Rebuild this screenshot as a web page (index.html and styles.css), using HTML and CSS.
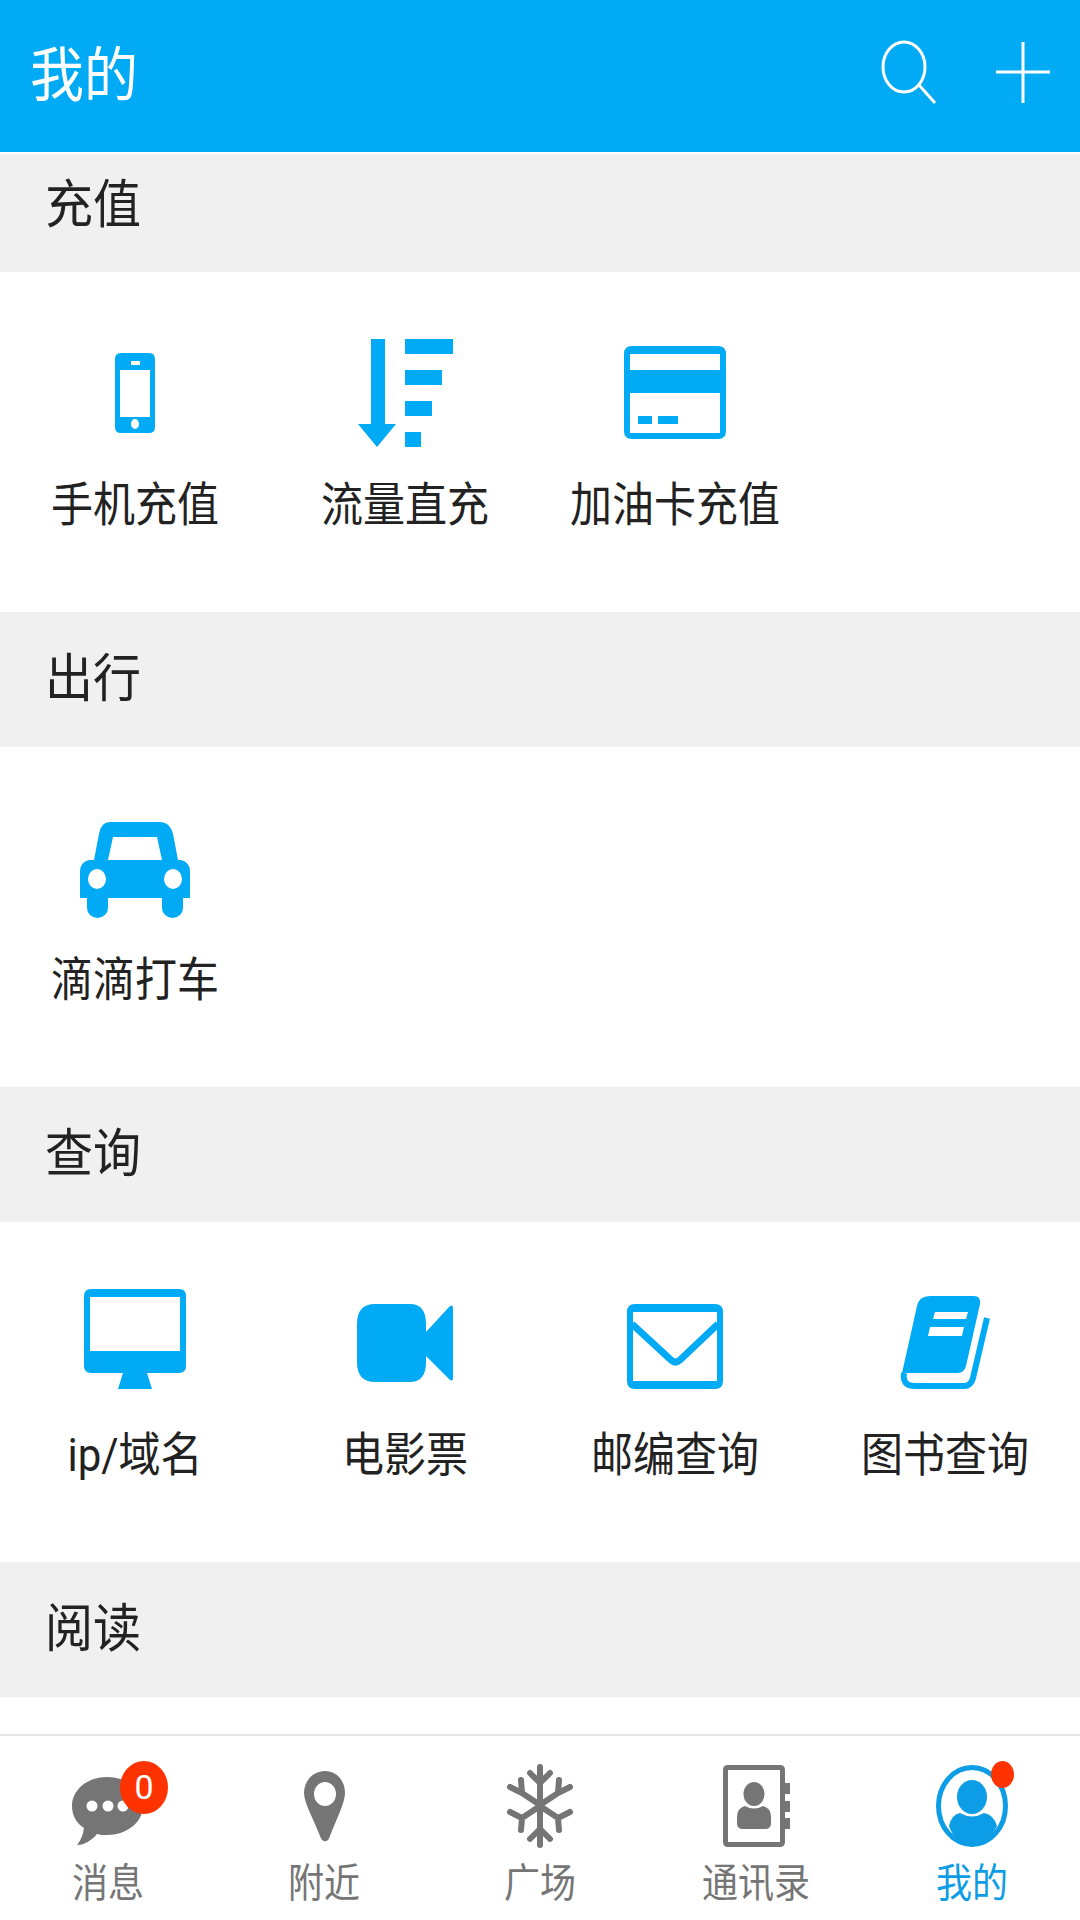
FILE: index.html
```html
<!DOCTYPE html>
<html lang="zh-CN">

<head>
    <meta charset="UTF-8">
    <meta name="viewport" content="width=device-width, initial-scale=1.0">
    <title>我的</title>
    <link rel="stylesheet" href="styles.css">
</head>

<body>
    <div class="app">
        <header class="top">
            <h1><span>我的</span></h1>
            <svg class="top-icon" width="180" height="80" viewBox="870 32 180 80">
                <ellipse cx="904" cy="67" rx="21" ry="25" fill="none" stroke="#fff" stroke-width="3" />
                <path d="M919 85L935 103" stroke="#fff" stroke-width="3" />
                <path d="M1023 42V103M996 72H1050" stroke="#fff" stroke-width="3" />
            </svg>
        </header>

        <main class="list">
            <h2 class="head first"><span>充值</span></h2>
            <div class="row">
                <div class="item">
                    <svg class="icon" viewBox="75 332 120 120">
                        <path fill-rule="evenodd" d="M121 353H149Q155 353 155 359V427Q155 433 149 433H121Q115 433 115 427V359Q115 353 121 353ZM120 370V417H150V370ZM131 361V365H140V361ZM135 419A4 5 0 1 0 135.01 429A4 5 0 1 0 135 419Z" />
                    </svg>
                    <span class="label">手机充值</span>
                </div>
                <div class="item">
                    <svg class="icon" viewBox="345 332 120 120">
                        <path d="M371 339H385V424H396L377 447L358 424H371ZM405 339H453V354H405ZM405 370H442V385H405ZM405 401H432V416H405ZM405 432H421V447H405Z" />
                    </svg>
                    <span class="label">流量直充</span>
                </div>
                <div class="item">
                    <svg class="icon" viewBox="615 332 120 120">
                        <path fill-rule="evenodd" d="M632 346H718Q726 346 726 354V431Q726 439 718 439H632Q624 439 624 431V354Q624 346 632 346ZM630 354V370H720V354ZM630 393V433H720V393ZM638 416H652V424H638ZM658 416H678V424H658Z" />
                    </svg>
                    <span class="label">加油卡充值</span>
                </div>
            </div>

            <h2 class="head"><span>出行</span></h2>
            <div class="row">
                <div class="item">
                    <svg class="icon" viewBox="75 807 120 120">
                        <path fill-rule="evenodd" d="M110 822H160Q170 822 173 834L178 860H181Q190 862 190 872V898H183V908A10.500 10 0 0 1 162 908V898H108V908A10.500 10 0 0 1 87 908V898H80V872Q80 862 89 860H94L99 834Q101 822 110 822ZM113 837L108 860H162L157 837ZM97 869A9 10 0 1 0 97.010 889A9 10 0 1 0 97 869ZM173 869A9 10 0 1 0 173.010 889A9 10 0 1 0 173 869Z" />
                    </svg>
                    <span class="label">滴滴打车</span>
                </div>
            </div>

            <h2 class="head"><span>查询</span></h2>
            <div class="row">
                <div class="item">
                    <svg class="icon" viewBox="75 1282 120 120">
                        <path fill-rule="evenodd" d="M91 1289H179Q186 1289 186 1296V1366Q186 1373 179 1373H147L152 1389H118L123 1373H91Q84 1373 84 1366V1296Q84 1289 91 1289ZM90 1297V1351H180V1297Z" />
                    </svg>
                    <span class="label">ip/域名</span>
                </div>
                <div class="item">
                    <svg class="icon" viewBox="345 1282 120 120">
                        <path d="M375 1304H410Q426 1304 426 1324V1362Q426 1382 410 1382H375Q357 1382 357 1362V1324Q357 1304 375 1304ZM426 1332L449 1307Q453 1303 453 1309V1377Q453 1383 449 1379L426 1356Z" />
                    </svg>
                    <span class="label">电影票</span>
                </div>
                <div class="item">
                    <svg class="icon" viewBox="615 1282 120 120">
                        <path fill-rule="evenodd" d="M635 1304H715Q723 1304 723 1312V1381Q723 1389 715 1389H635Q627 1389 627 1381V1312Q627 1304 635 1304ZM633 1312V1381H717V1312Z" />
                        <path d="M632 1324L671 1360Q675.500 1364 680 1360L718 1324" fill="none" stroke="#00aaf5" stroke-width="7" />
                    </svg>
                    <span class="label">邮编查询</span>
                </div>
                <div class="item">
                    <svg class="icon" viewBox="885 1282 120 120">
                        <path fill-rule="evenodd" d="M930 1296H974Q981 1296 980 1304L966 1366Q964 1373 958 1373H902L917 1306Q919 1296 930 1296ZM935 1312L933 1319H966L968 1312ZM930 1327L928 1336H962L964 1327Z" />
                        <path d="M904 1373Q902 1386 915 1386H964Q971 1386 973 1378L987 1318" fill="none" stroke="#00aaf5" stroke-width="6" />
                    </svg>
                    <span class="label">图书查询</span>
                </div>
            </div>

            <h2 class="head"><span>阅读</span></h2>
        </main>

        <nav class="tabs">
            <div class="tab">
                <svg class="tab-icon" viewBox="48 1756 120 95">
                    <path d="M107 1777C127 1777 143 1790 143 1806C143 1822 127 1835 107 1835C103 1835 100 1835 97 1834C92 1840 85 1845 77 1845C81 1840 83 1835 84 1828C76 1823 72 1815 72 1806C72 1790 87 1777 107 1777Z" />
                    <circle cx="92" cy="1806" r="5.500" fill="#fff" />
                    <circle cx="108" cy="1806" r="5.500" fill="#fff" />
                    <circle cx="123" cy="1806" r="5.500" fill="#fff" />
                </svg>
                <span class="tab-name">消息</span>
                <span class="badge">0</span>
            </div>
            <div class="tab">
                <svg class="tab-icon" viewBox="264 1756 120 95">
                    <path fill-rule="evenodd" d="M325 1771C337 1771 345 1781 345 1793C345 1803 336 1820 330 1836C328 1843 322 1843 320 1836C314 1820 304 1803 304 1793C304 1781 313 1771 325 1771ZM325 1782A11 12 0 1 0 325.010 1806A11 12 0 1 0 325 1782Z" />
                </svg>
                <span class="tab-name">附近</span>
            </div>
            <div class="tab">
                <svg class="tab-icon" viewBox="480 1756 120 95">
                    <g fill="none" stroke="#757575" stroke-width="6" stroke-linecap="round" stroke-linejoin="round">
                        <path d="M540 1767V1845M530 1773L540 1783L550 1773M530 1839L540 1829L550 1839" />
                        <path d="M540 1805L522 1793M521 1780L522 1793L510 1787M540 1805L558 1793M559 1780L558 1793L570 1787" />
                        <path d="M540 1806L522 1818M510 1812L522 1818L521 1830M540 1806L558 1818M570 1812L558 1818L559 1830" />
                    </g>
                </svg>
                <span class="tab-name">广场</span>
            </div>
            <div class="tab">
                <svg class="tab-icon" viewBox="696 1756 120 95">
                    <path fill-rule="evenodd" d="M728 1765H780Q785 1765 785 1770V1842Q785 1847 780 1847H728Q723 1847 723 1842V1770Q723 1765 728 1765ZM728 1770V1842H780V1770Z" />
                    <path d="M783 1783H790V1794H783ZM783 1801H790V1812H783ZM783 1818H790V1829H783Z" />
                    <ellipse cx="754" cy="1794" rx="10.500" ry="12" />
                    <path d="M745 1806Q754 1811 763 1806Q771 1808 771 1817V1823Q771 1829 765 1829H743Q737 1829 737 1823V1817Q737 1808 745 1806Z" />
                </svg>
                <span class="tab-name">通讯录</span>
            </div>
            <div class="tab on">
                <svg class="tab-icon" viewBox="912 1756 120 95">
                    <ellipse cx="972" cy="1806" rx="33.500" ry="38.500" fill="#fff" stroke="#0d9ce6" stroke-width="5" />
                    <ellipse cx="972" cy="1797" rx="15" ry="17" />
                    <path d="M960 1813Q972 1820 984 1813Q994 1815 997 1826C991 1838 982 1845 972 1845C962 1845 953 1838 949 1826Q951 1815 960 1813Z" />
                </svg>
                <span class="tab-name">我的</span>
                <span class="dot"></span>
            </div>
        </nav>
    </div>
</body>

</html>
```

FILE: styles.css
```css
* {
    margin: 0;
    padding: 0;
    box-sizing: border-box;
    font-family: Roboto, "Noto Sans CJK SC", sans-serif;
    font-weight: 400;
}

html,
body {
    width: 1080px;
    height: 1920px;
    overflow: hidden;
    background-color: #fff;
}

.app {
    height: 1920px;
    display: flex;
    flex-direction: column;
}

.top {
    height: 152px;
    padding-left: 30px;
    background-color: #00aaf5;
    color: #fff;
    display: flex;
    justify-content: space-between;
    align-items: flex-start;
}

.top>h1 {
    font-size: 54px;
    line-height: 152px;
}

.top>h1>span,
.head>span,
.label,
.tab-name {
    display: block;
    transform: scaleY(1.1);
}

.top-icon {
    margin-top: 32px;
    margin-right: 30px;
}

.list {
    flex: 1;
    padding-top: 2px;
    overflow: hidden;
}

.head {
    height: 135px;
    padding-left: 45px;
    background-color: #f0f0f0;
    color: #222;
    font-size: 48px;
    line-height: 134px;
}

.head.first {
    height: 118px;
    line-height: 102px;
}

.row {
    height: 340px;
    padding-top: 60px;
    display: grid;
    grid-template-columns: repeat(4, 270px);
    align-items: start;
}

.item {
    display: flex;
    flex-direction: column;
    align-items: center;
}

.icon {
    width: 120px;
    height: 120px;
    fill: #00aaf5;
}

.label {
    margin-top: 24px;
    font-size: 42px;
    line-height: 60px;
    color: #222;
}

.tabs {
    height: 186px;
    border-top: 2px solid #e6e6e6;
    padding-top: 20px;
    display: grid;
    grid-template-columns: repeat(5, 216px);
}

.tab {
    position: relative;
    display: flex;
    flex-direction: column;
    align-items: center;
}

.tab-icon {
    width: 120px;
    height: 95px;
    fill: #757575;
}

.tab-name {
    margin-top: 8px;
    font-size: 36px;
    line-height: 50px;
    color: #757575;
}

.tab.on .tab-icon {
    fill: #0d9ce6;
}

.tab.on .tab-name {
    color: #0d9ce6;
}

.badge {
    position: absolute;
    left: 120px;
    top: 5px;
    width: 48px;
    height: 53px;
    border-radius: 50%;
    background-color: #ff3300;
    color: #fff;
    font-size: 34px;
    line-height: 53px;
    text-align: center;
}

.dot {
    position: absolute;
    left: 127px;
    top: 5px;
    width: 23px;
    height: 27px;
    border-radius: 50%;
    background-color: #ff3300;
}
```
